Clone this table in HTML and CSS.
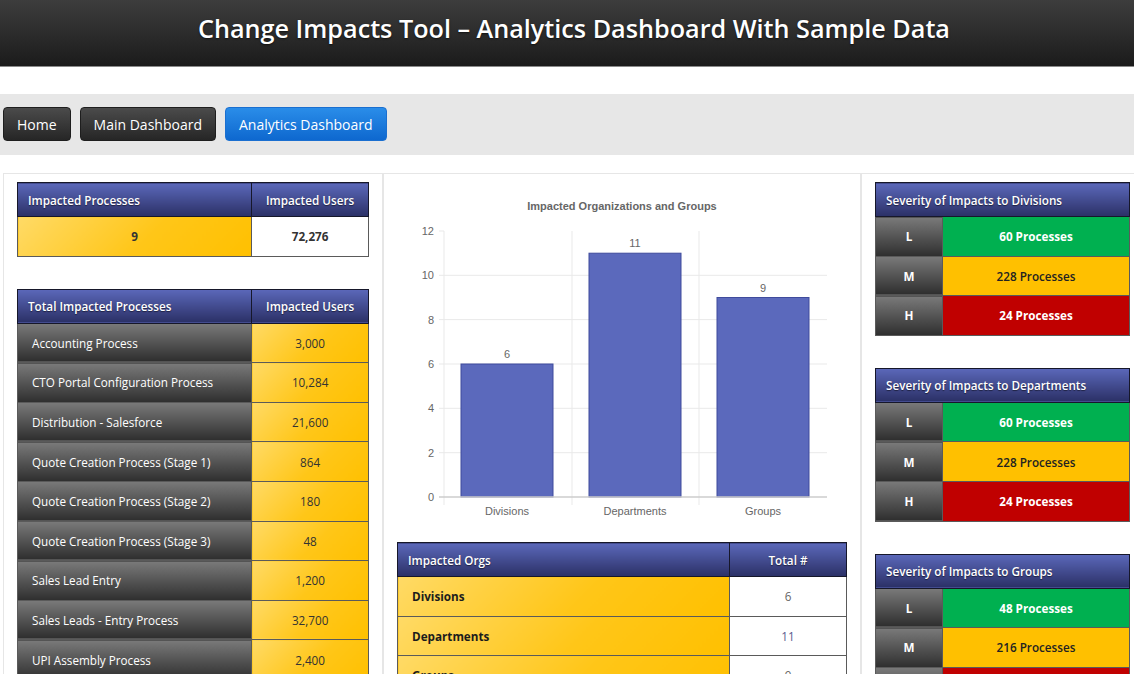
FILE: index.html
```html
<!DOCTYPE html>
<html lang="en">
<head>
<meta charset="utf-8">
<title>Change Impacts Tool – Analytics Dashboard</title>
<link rel="stylesheet" href="styles.css">
</head>
<body>
<div class="page">
  <header class="topbar">
    <h1>Change Impacts Tool – Analytics Dashboard With Sample Data</h1>
  </header>

  <nav class="navbar">
    <a class="btn" href="#">Home</a>
    <a class="btn" href="#">Main Dashboard</a>
    <a class="btn active" href="#">Analytics Dashboard</a>
  </nav>

  <main class="grid">
    <section class="panel">
      <table class="dt">
        <colgroup><col class="c-wide"><col class="c-num"></colgroup>
        <tr><th>Impacted Processes</th><th class="ctr">Impacted Users</th></tr>
        <tr><td class="gold ctr bold">9</td><td class="white ctr bold">72,276</td></tr>
      </table>

      <table class="dt">
        <colgroup><col class="c-wide"><col class="c-num"></colgroup>
        <tr><th>Total Impacted Processes</th><th class="ctr">Impacted Users</th></tr>
        <tr><td class="dark">Accounting Process</td><td class="gold ctr">3,000</td></tr>
        <tr><td class="dark">CTO Portal Configuration Process</td><td class="gold ctr">10,284</td></tr>
        <tr><td class="dark">Distribution - Salesforce</td><td class="gold ctr">21,600</td></tr>
        <tr><td class="dark">Quote Creation Process (Stage 1)</td><td class="gold ctr">864</td></tr>
        <tr><td class="dark">Quote Creation Process (Stage 2)</td><td class="gold ctr">180</td></tr>
        <tr><td class="dark">Quote Creation Process (Stage 3)</td><td class="gold ctr">48</td></tr>
        <tr><td class="dark">Sales Lead Entry</td><td class="gold ctr">1,200</td></tr>
        <tr><td class="dark">Sales Leads - Entry Process</td><td class="gold ctr">32,700</td></tr>
        <tr><td class="dark">UPI Assembly Process</td><td class="gold ctr">2,400</td></tr>
      </table>
    </section>

    <section class="panel">
      <svg class="chart" width="449" height="348" viewBox="0 0 449 348">
        <text class="ch-title" x="225" y="28">Impacted Organizations and Groups</text>
        <g class="grid-h">
          <line x1="42" y1="270.7" x2="430" y2="270.7"/>
          <line x1="42" y1="226.3" x2="430" y2="226.3"/>
          <line x1="42" y1="182" x2="430" y2="182"/>
          <line x1="42" y1="137.6" x2="430" y2="137.6"/>
          <line x1="42" y1="93.3" x2="430" y2="93.3"/>
          <line x1="42" y1="49" x2="47" y2="49"/>
        </g>
        <g class="grid-v">
          <line x1="47" y1="49" x2="47" y2="323"/>
          <line x1="175" y1="49" x2="175" y2="323"/>
          <line x1="302" y1="49" x2="302" y2="323"/>
        </g>
        <g class="ylab">
          <text x="37" y="319">0</text>
          <text x="37" y="274.7">2</text>
          <text x="37" y="230.3">4</text>
          <text x="37" y="186">6</text>
          <text x="37" y="141.6">8</text>
          <text x="37" y="97.3">10</text>
          <text x="37" y="53">12</text>
        </g>
        <g class="bars">
          <rect x="64" y="182" width="92" height="133"/>
          <rect x="192" y="71.2" width="92" height="243.8"/>
          <rect x="320" y="115.5" width="92" height="199.5"/>
        </g>
        <line class="zero" x1="42" y1="315" x2="430" y2="315"/>
        <g class="vlab">
          <text x="110" y="176">6</text>
          <text x="238" y="65">11</text>
          <text x="366" y="109.5">9</text>
        </g>
        <g class="xlab">
          <text x="110" y="333">Divisions</text>
          <text x="238" y="333">Departments</text>
          <text x="366" y="333">Groups</text>
        </g>
      </svg>

      <table class="dt orgs">
        <colgroup><col class="c-org"><col class="c-num"></colgroup>
        <tr><th>Impacted Orgs</th><th class="ctr">Total #</th></tr>
        <tr><td class="gold bold dk">Divisions</td><td class="white ctr grey">6</td></tr>
        <tr><td class="gold bold dk">Departments</td><td class="white ctr purple">11</td></tr>
        <tr><td class="gold bold dk">Groups</td><td class="white ctr grey">9</td></tr>
      </table>
    </section>

    <section class="panel">
      <table class="dt sev">
        <colgroup><col class="c-lvl"><col></colgroup>
        <tr><th colspan="2">Severity of Impacts to Divisions</th></tr>
        <tr><td class="dark ctr bold">L</td><td class="green ctr bold">60 Processes</td></tr>
        <tr><td class="dark ctr bold">M</td><td class="amber ctr semi">228 Processes</td></tr>
        <tr><td class="dark ctr bold">H</td><td class="red ctr bold">24 Processes</td></tr>
      </table>

      <table class="dt sev">
        <colgroup><col class="c-lvl"><col></colgroup>
        <tr><th colspan="2">Severity of Impacts to Departments</th></tr>
        <tr><td class="dark ctr bold">L</td><td class="green ctr bold">60 Processes</td></tr>
        <tr><td class="dark ctr bold">M</td><td class="amber ctr semi">228 Processes</td></tr>
        <tr><td class="dark ctr bold">H</td><td class="red ctr bold">24 Processes</td></tr>
      </table>

      <table class="dt sev">
        <colgroup><col class="c-lvl"><col></colgroup>
        <tr><th colspan="2">Severity of Impacts to Groups</th></tr>
        <tr><td class="dark ctr bold">L</td><td class="green ctr bold">48 Processes</td></tr>
        <tr><td class="dark ctr bold">M</td><td class="amber ctr semi">216 Processes</td></tr>
        <tr><td class="dark ctr bold">H</td><td class="red ctr bold">12 Processes</td></tr>
      </table>
    </section>
  </main>
</div>
</body>
</html>
```

FILE: styles.css
```css
* { box-sizing: border-box; }

html, body {
  margin: 0;
  padding: 0;
  background: #ffffff;
  overflow-x: hidden;
}

body {
  font-family: "Open Sans", "Liberation Sans", sans-serif;
  color: #333;
}

.page {
  width: 1148px;
}

/* ---------- header ---------- */
.topbar {
  height: 67px;
  background: linear-gradient(#3d3d3d, #1b1b1b);
  border-bottom: 1px solid #8a8a8a;
  display: flex;
  align-items: center;
  justify-content: center;
  padding-bottom: 10px;
}

.topbar h1 {
  margin: 0;
  color: #ffffff;
  font-size: 25.2px;
  font-weight: 600;
  text-shadow: 0 1px 2px rgba(0, 0, 0, 0.6);
}

/* ---------- nav ---------- */
.navbar {
  margin-top: 27px;
  height: 61px;
  background: #e7e7e7;
  padding: 13px 3px;
  display: flex;
  gap: 9px;
}

.btn {
  height: 34px;
  padding: 0 13px;
  display: flex;
  align-items: center;
  border-radius: 4px;
  border: 1px solid #1e1e1e;
  background: linear-gradient(#4b4b4b, #262626);
  color: #ffffff;
  font-size: 14px;
  text-decoration: none;
}

.btn.active {
  background: linear-gradient(#2a8de9, #0e68cf);
  border-color: #1a6fd0;
}

/* ---------- content grid ---------- */
.grid {
  display: grid;
  grid-template-columns: 380px 478px 283px;
  margin: 18px 3px 0;
}

.panel {
  border: 1px solid #e6e6e6;
  padding: 8px 13px;
  min-height: 560px;
}

/* ---------- tables ---------- */
.dt {
  width: 100%;
  border-collapse: collapse;
  font-size: 11.7px;
  margin-bottom: 32px;
  border: 1px solid #555;
}

.c-wide { width: 235px; }
.c-num { width: 117px; }
.c-org { width: 332px; }
.c-lvl { width: 67px; }

.dt th {
  height: 34px;
  padding: 0 10px;
  text-align: left;
  font-weight: 600;
  color: #ffffff;
  background: linear-gradient(#5b68ba, #2b3066);
  border: 1px solid #16172a;
  text-shadow: 0 1px 1px rgba(0, 0, 0, 0.5);
}

.dt td {
  height: 39.6px;
  padding: 0 14px;
  border: 1px solid #5a5a5a;
}

.dt .ctr { text-align: center; }
.bold { font-weight: 700; }
.semi { font-weight: 600; }

.dark {
  background: linear-gradient(#7a7a7a, #2e2e2e);
  color: #ffffff;
}

.gold {
  background: linear-gradient(135deg, #ffda66 0%, #ffc618 55%, #ffc000 100%);
  color: #333333;
}

.white {
  background: #ffffff;
  color: #333333;
}

.dk { color: #1c1c1c; }
.grey { color: #666666; }
.purple { color: #5a5a8e; }

.green { background: #00b050; color: #ffffff; }
.amber { background: #ffc000; color: #222222; }
.red { background: #c00000; color: #ffffff; }

.orgs { margin-top: 12px; }

/* ---------- chart ---------- */
.chart {
  display: block;
  font-family: "Liberation Sans", Arial, sans-serif;
}

.ch-title {
  font-size: 11px;
  font-weight: 700;
  fill: #666666;
  text-anchor: middle;
}

.grid-h line,
.grid-v line {
  stroke: #e9e9e9;
  stroke-width: 1;
}

.zero {
  stroke: #cccccc;
  stroke-width: 1.5;
}

.ylab text {
  font-size: 11px;
  fill: #666666;
  text-anchor: end;
}

.bars rect {
  fill: #5b69bc;
  stroke: #3f4b9c;
  stroke-width: 1;
}

.vlab text,
.xlab text {
  font-size: 11px;
  fill: #666666;
  text-anchor: middle;
}
```
